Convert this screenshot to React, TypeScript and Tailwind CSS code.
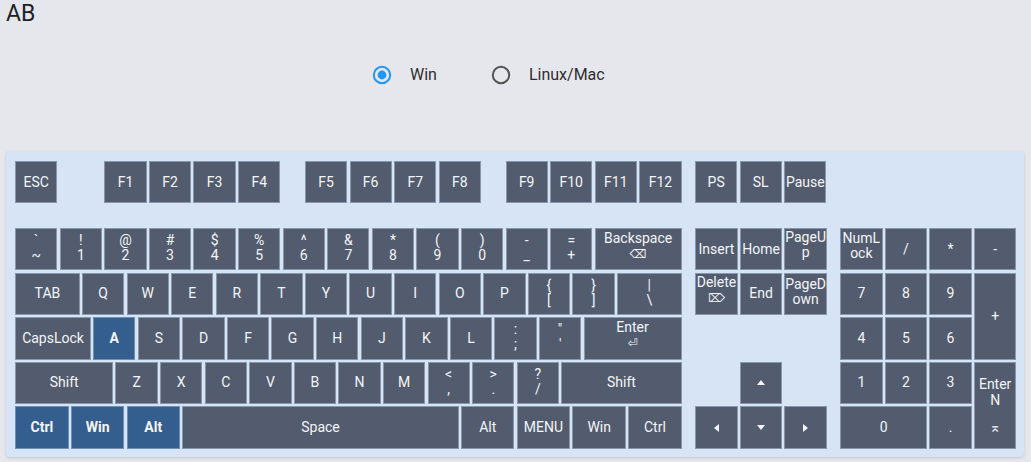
import React from "react";

type KeyProps = {
  label: React.ReactNode;
  w?: string;
  hl?: boolean;
  className?: string;
};

const W: Record<string, string> = {
  "1": "w-[42.3px]",
  "1.25": "w-[53.45px]",
  "1.5": "w-[64.6px]",
  "1.75": "w-[75.75px]",
  "2": "w-[86.9px]",
  "2.25": "w-[98.05px]",
  "2.75": "w-[120.35px]",
  "6.25": "w-[276.45px]",
};

function Key({ label, w = "1", hl = false, className = "" }: KeyProps) {
  return (
    <div
      className={
        "m-[1.15px] box-border border flex flex-col items-center justify-center text-center text-[14px] leading-[15px] text-[#f3f5f8] shrink-0 " +
        (hl
          ? "bg-[#335e8d] border-[#6f8fb5] font-bold"
          : "bg-[#525c6e] border-[#8797ae]") +
        " " +
        (className || W[w] + " h-[42.3px]")
      }
    >
      {label}
    </div>
  );
}

function Two({ a, b }: { a: string; b: string }) {
  return (
    <div className="flex flex-col items-center leading-[15px] -mt-[2px]">
      <span>{a}</span>
      <span>{b}</span>
    </div>
  );
}

function Tri({ dir }: { dir: "up" | "down" | "left" | "right" }) {
  const pts: Record<string, string> = {
    up: "0,5 4,0 8,5",
    down: "0,0 8,0 4,5",
    left: "5,0 5,8 0,4",
    right: "0,0 0,8 5,4",
  };
  const vert = dir === "up" || dir === "down";
  return (
    <svg width={vert ? 8 : 5} height={vert ? 5 : 8} viewBox={vert ? "0 0 8 5" : "0 0 5 8"}>
      <polygon points={pts[dir]} fill="#f3f5f8" />
    </svg>
  );
}

const sym = "font-['DejaVu_Sans',sans-serif] text-[12px] leading-[13px]";

function Radio({ checked }: { checked: boolean }) {
  return (
    <svg width="20" height="20" viewBox="0 0 20 20">
      <circle
        cx="10"
        cy="10"
        r="8.2"
        fill="none"
        stroke={checked ? "#2196f3" : "#555"}
        strokeWidth="2"
      />
      {checked && <circle cx="10" cy="10" r="4.4" fill="#2196f3" />}
    </svg>
  );
}

export default function App() {
  const row1: [string, string][] = [
    ["`", "~"],
    ["!", "1"],
    ["@", "2"],
    ["#", "3"],
    ["$", "4"],
    ["%", "5"],
    ["^", "6"],
    ["&", "7"],
    ["*", "8"],
    ["(", "9"],
    [")", "0"],
    ["-", "_"],
    ["=", "+"],
  ];
  return (
    <div className="w-[1031px] h-[462px] bg-[#e6e7ec] font-['Roboto',sans-serif] overflow-hidden">
      <div className="h-[28px] pl-[6px] text-[23px] leading-[28px] text-[#222]">AB</div>
      <div className="mt-[33px] h-[28px] flex items-center pl-[372px] text-[16px] text-[#2e2e2e]">
        <Radio checked />
        <span className="ml-[18px]">Win</span>
        <span className="ml-[54px] flex">
          <Radio checked={false} />
        </span>
        <span className="ml-[18px]">Linux/Mac</span>
      </div>
      <div className="mt-[62px] ml-[6px] w-[1018px] bg-[#d6e4f6] rounded-[4px] shadow-[0_1px_3px_rgba(0,0,0,0.15)] pl-[8px] pt-[9px] pb-[7px]">
        {/* function row */}
        <div className="flex h-[44.6px]">
          <Key label="ESC" />
          <div className="w-[44.6px] shrink-0" />
          {["F1", "F2", "F3", "F4"].map((k) => (
            <Key key={k} label={k} />
          ))}
          <div className="w-[22.3px] shrink-0" />
          {["F5", "F6", "F7", "F8"].map((k) => (
            <Key key={k} label={k} />
          ))}
          <div className="w-[22.3px] shrink-0" />
          {["F9", "F10", "F11", "F12"].map((k) => (
            <Key key={k} label={k} />
          ))}
          <div className="w-[11.15px] shrink-0" />
          <Key label="PS" />
          <Key label="SL" />
          <Key label="Pause" />
        </div>
        <div className="h-[22.3px]" />
        <div className="flex">
          {/* main block */}
          <div className="flex flex-col w-[669px] shrink-0">
            <div className="flex h-[44.6px]">
              {row1.map(([a, b]) => (
                <Key key={a} label={<Two a={a} b={b} />} />
              ))}
              <Key
                w="2"
                label={
                  <div className="flex flex-col items-center -mt-[6px]">
                    <span>Backspace</span>
                    <span className={sym + " mt-[2px]"}>⌫</span>
                  </div>
                }
              />
            </div>
            <div className="flex h-[44.6px]">
              <Key w="1.5" label="TAB" />
              {["Q", "W", "E", "R", "T", "Y", "U", "I", "O", "P"].map((k) => (
                <Key key={k} label={k} />
              ))}
              <Key label={<Two a="{" b="[" />} />
              <Key label={<Two a="}" b="]" />} />
              <Key w="1.5" label={<Two a="|" b="\" />} />
            </div>
            <div className="flex h-[44.6px]">
              <Key w="1.75" label="CapsLock" />
              <Key hl label="A" />
              {["S", "D", "F", "G", "H", "J", "K", "L"].map((k) => (
                <Key key={k} label={k} />
              ))}
              <Key label={<Two a=":" b=";" />} />
              <Key label={<Two a={'"'} b="'" />} />
              <Key
                w="2.25"
                label={
                  <div className="flex flex-col items-center -mt-[6px]">
                    <span>Enter</span>
                    <span className={sym + " mt-[2px]"}>⏎</span>
                  </div>
                }
              />
            </div>
            <div className="flex h-[44.6px]">
              <Key w="2.25" label="Shift" />
              {["Z", "X", "C", "V", "B", "N", "M"].map((k) => (
                <Key key={k} label={k} />
              ))}
              <Key label={<Two a="<" b="," />} />
              <Key label={<Two a=">" b="." />} />
              <Key label={<Two a="?" b="/" />} />
              <Key w="2.75" label="Shift" />
            </div>
            <div className="flex h-[44.6px]">
              <Key w="1.25" hl label="Ctrl" />
              <Key w="1.25" hl label="Win" />
              <Key w="1.25" hl label="Alt" />
              <Key w="6.25" label="Space" />
              <Key w="1.25" label="Alt" />
              <Key w="1.25" label="MENU" />
              <Key w="1.25" label="Win" />
              <Key w="1.25" label="Ctrl" />
            </div>
          </div>
          <div className="w-[11.15px] shrink-0" />
          {/* nav cluster */}
          <div className="grid grid-cols-[repeat(3,44.6px)] grid-rows-[repeat(5,44.6px)] shrink-0">
            <Key className="" label="Insert" />
            <Key label="Home" />
            <Key
              label={
                <div className="flex flex-col items-center -mt-[8px] leading-[15px]">
                  <span>PageU</span>
                  <span>p</span>
                </div>
              }
            />
            <Key
              label={
                <div className="flex flex-col items-center -mt-[8px]">
                  <span>Delete</span>
                  <span className={sym + " mt-[2px]"}>⌦</span>
                </div>
              }
            />
            <Key label="End" />
            <Key
              label={
                <div className="flex flex-col items-center -mt-[4px] leading-[15px]">
                  <span>PageD</span>
                  <span>own</span>
                </div>
              }
            />
            <div className="col-span-3" />
            <div />
            <Key label={<Tri dir="up" />} />
            <div />
            <Key label={<Tri dir="left" />} />
            <Key label={<Tri dir="down" />} />
            <Key label={<Tri dir="right" />} />
          </div>
          <div className="w-[11.15px] shrink-0" />
          {/* numpad */}
          <div className="grid grid-cols-[repeat(4,44.6px)] grid-rows-[repeat(5,44.6px)] shrink-0">
            <Key
              label={
                <div className="flex flex-col items-center -mt-[6px] leading-[15px]">
                  <span>NumL</span>
                  <span>ock</span>
                </div>
              }
            />
            <Key label="/" />
            <Key label="*" />
            <Key label="-" />
            <Key label="7" />
            <Key label="8" />
            <Key label="9" />
            <Key className="row-span-2" label="+" />
            <Key label="4" />
            <Key label="5" />
            <Key label="6" />
            <Key label="1" />
            <Key label="2" />
            <Key label="3" />
            <Key
              className="row-span-2"
              label={
                <div className="flex flex-col items-center leading-[16px]">
                  <span>Enter</span>
                  <span>N</span>
                  <span className="font-['DejaVu_Sans',sans-serif] text-[14px] leading-[14px] mt-[12px]">⌅</span>
                </div>
              }
            />
            <Key className="col-span-2" label="0" />
            <Key label="." />
          </div>
        </div>
      </div>
    </div>
  );
}
